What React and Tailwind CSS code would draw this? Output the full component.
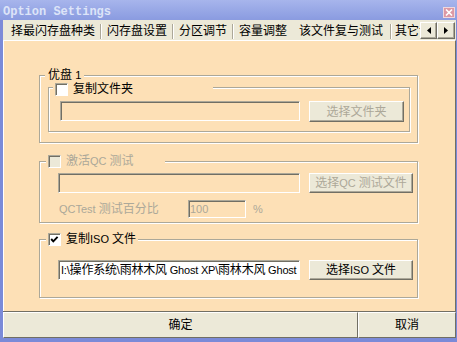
import React from "react";

const sunken =
  "border border-t-[#aca899] border-l-[#aca899] border-b-white border-r-white shadow-[inset_1px_1px_0_#716f64]";
const raised =
  "border border-t-white border-l-white border-b-[#716f64] border-r-[#716f64] shadow-[inset_-1px_-1px_0_#aca899] bg-[#ece9d8]";
const etched =
  "relative border border-[#aca899] shadow-[inset_1px_1px_0_#fff,1px_1px_0_#fff]";

function L({ children }) {
  return <span className="text-[11px]">{children}</span>;
}

function Check({ checked, disabled }) {
  return (
    <div
      className={`w-[13px] h-[13px] shrink-0 flex items-center justify-center ${sunken} ${
        disabled ? "bg-[#ece9d8]" : "bg-white"
      }`}
    >
      {checked && (
        <svg width="9" height="9" viewBox="0 0 9 9">
          <polyline
            points="1.2,4 3.3,6.3 7.6,1.8"
            fill="none"
            stroke="#000"
            strokeWidth="1.9"
          />
        </svg>
      )}
    </div>
  );
}

function Btn({ children, w, h, disabled }) {
  return (
    <div
      className={`${raised} ${w} ${h} shrink-0 flex items-center justify-center whitespace-nowrap ${
        disabled ? "text-[#aca899]" : "text-black"
      }`}
    >
      <span>{children}</span>
    </div>
  );
}

function Tab({ children, w, pl, center }) {
  return (
    <div
      className={`${w} h-[20px] shrink-0 flex items-center pt-[2px] whitespace-nowrap ${
        center ? "justify-center" : ""
      } ${pl || ""}`}
    >
      {children}
    </div>
  );
}

function Sep() {
  return (
    <div className="h-[20px] flex items-end pb-[1px] shrink-0">
      <div className="w-[1px] h-[15px] bg-[#aca899]" />
      <div className="w-[1px] h-[15px] bg-white" />
    </div>
  );
}

export default function App() {
  return (
    <div className="w-[457px] h-[342px] overflow-hidden flex flex-col bg-[#7b8ad8] font-['Liberation_Sans','Noto_Sans_CJK_SC',sans-serif] text-[12px] leading-none text-black">
      {/* Title bar */}
      <div className="h-[20px] shrink-0 flex items-start justify-between bg-linear-to-b from-[#a7b5ec] to-[#8a9be0] pl-[3px] pr-[2px]">
        <span className="font-['Liberation_Mono',monospace] font-bold text-[12px] leading-none text-[#dde4f8] mt-[6px]">
          Option Settings
        </span>
        <div className="mt-[7px] w-[12px] h-[11px] bg-[#dc98a4] border border-[#f0d8dc] flex items-center justify-center">
          <svg width="8" height="7" viewBox="0 0 8 7">
            <path d="M1 0.5 L7 6.5 M7 0.5 L1 6.5" stroke="#fff" strokeWidth="1.6" />
          </svg>
        </div>
      </div>

      <div className="flex-1 flex pl-[3px] pr-[1px] pb-[4px]">
        <div className="flex-1 flex flex-col bg-[#ece9d8]">
          {/* Tab row */}
          <div className="h-[20px] shrink-0 flex">
            <div className="w-[417px] flex overflow-hidden">
              <Tab w="w-[97px]" pl="pl-[8px]">择最闪存盘种类</Tab>
              <Sep />
              <Tab w="w-[70px]" center>闪存盘设置</Tab>
              <Sep />
              <Tab w="w-[58px]" center>分区调节</Tab>
              <Sep />
              <Tab w="w-[58px]" center>容量调整</Tab>
              <Tab w="w-[98px]" center>该文件复与测试</Tab>
              <Sep />
              <Tab w="w-[40px]" pl="pl-[3px]">其它设置</Tab>
            </div>
            <div className="flex items-end pb-[1px]">
              <div className={`${raised} w-[17px] h-[17px] flex items-center justify-center`}>
                <svg width="4" height="7" viewBox="0 0 4 7">
                  <path d="M4 0 L0 3.5 L4 7 Z" fill="#000" />
                </svg>
              </div>
              <div className={`${raised} w-[18px] h-[17px] flex items-center justify-center`}>
                <svg width="4" height="7" viewBox="0 0 4 7">
                  <path d="M0 0 L4 3.5 L0 7 Z" fill="#000" />
                </svg>
              </div>
            </div>
          </div>

          {/* Panel */}
          <div className="h-[271px] shrink-0 bg-[#fde0b6] border-t border-l border-t-white border-l-white border-r border-r-[#716f64] pl-[35px] pt-[34px] flex flex-col">
            {/* Group 1 */}
            <div className={`${etched} w-[379px] h-[68px] pl-[8px] pt-[11px]`}>
              <div className="absolute left-[5px] top-[-8px] h-[14px] px-[3px] bg-[#fde0b6] flex items-center">
                <span>
                  优盘 <L>1</L>
                </span>
              </div>
              <div className={`${etched} w-[362px] h-[45px] flex items-start gap-[9px] pl-[11px] pt-[13px]`}>
                <div className="absolute left-[4px] top-[-6px] w-[160px] h-[14px] bg-[#fde0b6] flex items-center gap-[5px] pl-[2px]">
                  <Check />
                  <span>复制文件夹</span>
                </div>
                <div className={`${sunken} w-[240px] h-[20px] bg-[#fde0b6]`} />
                <Btn w="w-[95px]" h="h-[21px]" disabled>
                  选择文件夹
                </Btn>
              </div>
            </div>

            {/* Group 2 */}
            <div className={`${etched} w-[379px] h-[62px] mt-[18px] pl-[18px] pt-[11px] text-[#aca899]`}>
              <div className="absolute left-[6px] top-[-8px] w-[119px] h-[14px] bg-[#fde0b6] flex items-center gap-[5px] pl-[2px]">
                <Check disabled />
                <span>
                  激活<L>QC </L>测试
                </span>
              </div>
              <div className="flex items-start gap-[9px]">
                <div className={`${sunken} w-[242px] h-[20px] bg-[#fde0b6]`} />
                <Btn w="w-[104px]" h="h-[20px]" disabled>
                  选择<L>QC </L>测试文件
                </Btn>
              </div>
              <div className="flex items-center mt-[7px]">
                <div className="w-[130px] pl-[1px] whitespace-nowrap">
                  <span>
                    <L>QCTest </L>测试百分比
                  </span>
                </div>
                <div className={`${sunken} w-[58px] h-[18px] bg-[#fde0b6] flex items-center pl-[1px]`}>
                  <L>100</L>
                </div>
                <div className="ml-[7px]">
                  <L>%</L>
                </div>
              </div>
            </div>

            {/* Group 3 */}
            <div className={`${etched} w-[379px] h-[59px] mt-[16px] pl-[18px] pt-[20px] flex items-start gap-[9px]`}>
              <div className="absolute left-[6px] top-[-8px] w-[92px] h-[14px] bg-[#fde0b6] flex items-center gap-[5px] pl-[2px]">
                <Check checked />
                <span>
                  复制<L>ISO </L>文件
                </span>
              </div>
              <div className={`${sunken} w-[242px] h-[20px] bg-white flex items-center pl-[2px] overflow-hidden whitespace-nowrap`}>
                <span className="tracking-[-0.2px]">
                  <L>I:\</L>操作系统<L>\</L>雨林木风<L> Ghost XP\</L>雨林木风<L> Ghost</L>
                </span>
              </div>
              <Btn w="w-[104px]" h="h-[20px]">
                选择<L>ISO </L>文件
              </Btn>
            </div>
          </div>

          {/* Bottom buttons */}
          <div className="h-[27px] shrink-0 flex border-t border-t-[#716f64]">
            <div className="w-[355px] flex items-center justify-center border-t border-l border-t-white border-l-white border-b border-r border-b-[#716f64] border-r-[#716f64]">
              确定
            </div>
            <div className="flex-1 flex items-center justify-center border-t border-l border-t-white border-l-white border-b border-r border-b-[#716f64] border-r-[#716f64]">
              取消
            </div>
          </div>
        </div>
      </div>
    </div>
  );
}
